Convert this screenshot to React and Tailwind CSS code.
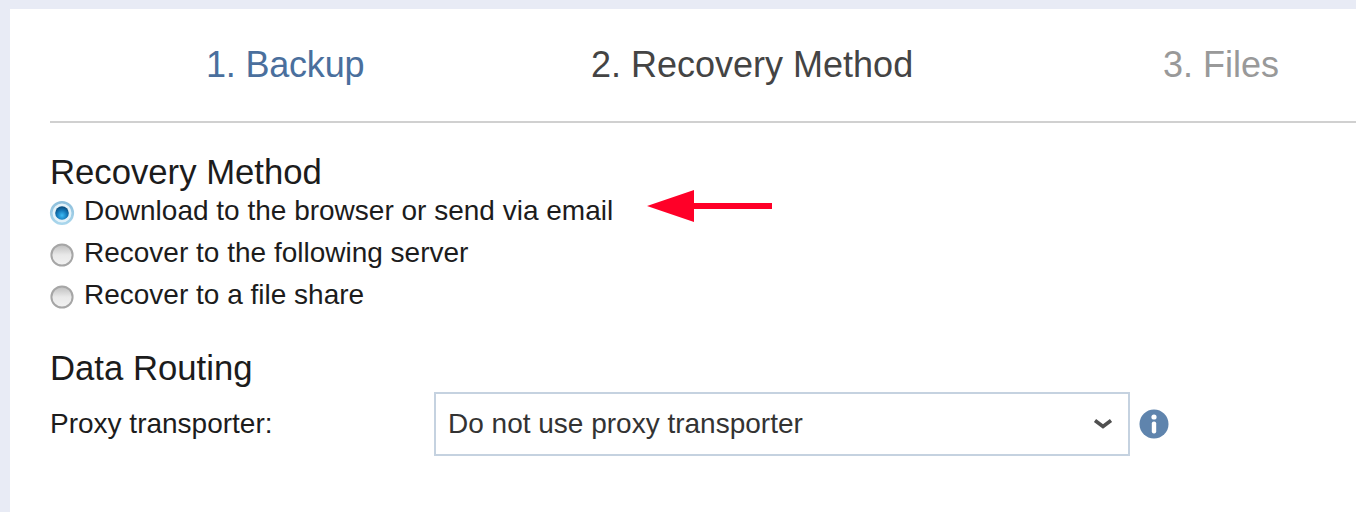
const font = "font-['Liberation_Sans',Arial,sans-serif]";

function Radio({ checked }) {
  return (
    <svg width="26" height="26" viewBox="0 0 26 26" className="shrink-0">
      <defs>
        <linearGradient id="off" x1="0" y1="0" x2="0" y2="1">
          <stop offset="0" stopColor="#bdbdbd" />
          <stop offset="0.5" stopColor="#e9e9e9" />
          <stop offset="1" stopColor="#f2f2f2" />
        </linearGradient>
        <radialGradient id="dot" cx="0.5" cy="0.68" r="0.62">
          <stop offset="0" stopColor="#3dbcf5" />
          <stop offset="0.6" stopColor="#1478b8" />
          <stop offset="1" stopColor="#0b4f80" />
        </radialGradient>
        <linearGradient id="ring" x1="0" y1="0" x2="0" y2="1">
          <stop offset="0" stopColor="#8fc0dc" />
          <stop offset="1" stopColor="#a9d6ec" />
        </linearGradient>
      </defs>
      {checked ? (
        <>
          <circle cx="13" cy="13" r="10.8" fill="#e4f2f9" stroke="url(#ring)" strokeWidth="2.6" />
          <circle cx="13" cy="13" r="6.8" fill="url(#dot)" />
        </>
      ) : (
        <circle cx="13" cy="13" r="10.6" fill="url(#off)" stroke="#a6a6a6" strokeWidth="2" />
      )}
    </svg>
  );
}

function Option({ checked, label, children }) {
  return (
    <div className="flex items-center h-[42px]">
      <div className="w-[35px] ml-[-1px] pt-[3px] flex"><Radio checked={checked} /></div>
      <span className="text-[28px] leading-[30px] text-[#1c1c1c]">{label}</span>
      {children}
    </div>
  );
}

export default function App() {
  return (
    <div className={`${font} w-[1356px] h-[512px] overflow-hidden bg-[#e8ebf5] pt-[9px] pl-[10px]`}>
      <div className="bg-white h-[503px] pl-[40px]">
        <div className="flex h-[114px] border-b-2 border-[#d0d0d0] items-start pt-[33px] text-[36px] leading-[46px]">
          <span className="ml-[156px] w-[385px] text-[#4a6f9d] tracking-[-0.2px]">1. Backup</span>
          <span className="w-[572px] text-[#444444]">2. Recovery Method</span>
          <span className="text-[#999999]">3. Files</span>
        </div>
        <h2 className="text-[34.7px] leading-[40px] text-[#1c1c1c] mt-[29px]">Recovery Method</h2>
        <div className="mt-[-2px]">
          <Option checked label="Download to the browser or send via email">
            <svg width="128" height="34" viewBox="0 0 128 34" className="ml-[33px] mt-[-10px]">
              <polygon points="1,17 48,1 48,33" fill="#ff0028" />
              <rect x="46" y="14" width="80" height="6" fill="#ff0028" />
            </svg>
          </Option>
          <Option label="Recover to the following server" />
          <Option label="Recover to a file share" />
        </div>
        <h2 className="text-[34.7px] leading-[40px] text-[#1c1c1c] mt-[32px]">Data Routing</h2>
        <div className="flex items-center mt-[4px]">
          <span className="w-[384px] text-[28px] leading-[30px] text-[#1c1c1c]">Proxy transporter:</span>
          <div className="w-[696px] h-[64px] border-2 border-[#c5d2e0] flex items-center pl-[12px] pr-[15px] text-[28px] text-[#333333]">
            <span className="flex-1">Do not use proxy transporter</span>
            <svg width="20" height="12" viewBox="0 0 20 12">
              <path d="M2 2.5 L10 8.5 L18 2.5" fill="none" stroke="#505050" strokeWidth="3.6" />
            </svg>
          </div>
          <svg width="30" height="30" viewBox="0 0 30 30" className="ml-[9px]">
            <circle cx="15" cy="15" r="14.5" fill="#5f84ad" />
            <circle cx="15" cy="8" r="2.6" fill="#ffffff" />
            <rect x="12.8" y="12.5" width="4.4" height="12" rx="2" fill="#ffffff" />
          </svg>
        </div>
      </div>
    </div>
  );
}
